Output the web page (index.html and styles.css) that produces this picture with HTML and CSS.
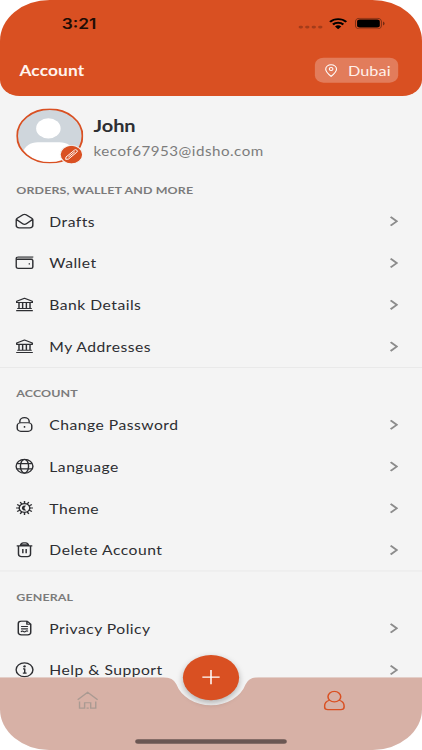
FILE: index.html
```html
<!DOCTYPE html>
<html lang="en">
<head>
<meta charset="utf-8">
<title>Account</title>
<link rel="stylesheet" href="styles.css">
</head>
<body>
<svg width="0" height="0" class="defs">
  <symbol id="chev" viewBox="0 0 8 12"><path d="M1 1l5.700 5L1 11" fill="none" stroke="#8c8c8c" stroke-width="1.900"/></symbol>
  <symbol id="bank" viewBox="0 0 18 18"><path d="M1.500 5.200 9 1.700l7.500 3.500v1.500h-15zM3.700 7v6.500M7.200 7v6.500M10.800 7v6.500M14.300 7v6.500M2 13.700h14M1 16.300h16"/></symbol>
</svg>
<div class="frame">
<div class="phone">
  <header class="header">
    <div class="status">
      <span class="time">3:21</span>
      <span class="signals">
        <i class="dots"><b></b><b></b><b></b><b></b></i>
        <svg class="wifi" width="17" height="13" viewBox="0 0 17 13"><g fill="none" stroke="#000" stroke-width="2.200"><path d="M1 4.600a10.700 10.700 0 0 1 15 0"/><path d="M3.700 7.600a6.900 6.900 0 0 1 9.600 0"/></g><path d="M5.600 9.700a4.200 4.200 0 0 1 5.800 0L8.500 12.800z"/></svg>
        <svg class="battery" width="28" height="13" viewBox="0 0 28 13"><rect x=".5" y=".5" width="24" height="12" rx="3.800" fill="none" stroke="#000" stroke-opacity=".4"/><rect x="2" y="2" width="21" height="9" rx="2.500"/><path d="M26 4.300v4.400q1.400-.6 1.400-2.200T26 4.300z" fill-opacity=".5"/></svg>
      </span>
    </div>
    <div class="bar">
      <h1>Account</h1>
      <div class="city"><svg width="12" height="15" viewBox="0 0 12 15" fill="none" stroke="#fff"><path d="M6 14C3.200 11 1 8.600 1 5.800a5 5 0 0 1 10 0C11 8.600 8.800 11 6 14z"/><circle cx="6" cy="5.600" r="1.700"/></svg><span>Dubai</span></div>
    </div>
  </header>

  <div class="profile">
    <div class="avatar">
      <svg width="62" height="62" viewBox="0 0 62 62"><clipPath id="c"><circle cx="31" cy="31" r="30"/></clipPath><g clip-path="url(#c)"><path fill="#cfd6dc" d="M0 0h62v62H0z"/><circle cx="29.700" cy="22.500" r="11.300" fill="#fff"/><path fill="#fff" d="M6 50c2-8 7-12 14-12h20c7 0 12 4 14 12v14H6z"/></g><circle cx="31" cy="31" r="30.200" fill="none" stroke="#d95022" stroke-width="1.700"/></svg>
      <svg class="edit" width="22" height="22" viewBox="0 0 22 22"><circle cx="11" cy="11" r="10.400" fill="#d95022" stroke="#f4f4f4"/><g transform="rotate(-45 11 11)" fill="none" stroke="#fff" stroke-width=".9"><path d="M3.500 11l2-1.600h11q1.600 0 1.600 1.600t-1.600 1.600h-11zM7 11h8.500"/></g></svg>
    </div>
    <div class="who"><h2>John</h2><p>kecof67953@idsho.com</p></div>
  </div>

  <section>
    <h3>ORDERS, WALLET AND MORE</h3>
    <div class="row"><svg class="ico" viewBox="0 0 18 18"><path d="M1 7.700Q1 6.500 2 5.800L7.500 1.800Q9 .8 10.500 1.800L16 5.800Q17 6.500 17 7.700V14Q17 17 14 17H4Q1 17 1 14zM1.300 7.200l5.900 5q1.800 1.500 3.600 0l5.900-5"/></svg><span>Drafts</span><svg class="chev"><use href="#chev"/></svg></div>
    <div class="row"><svg class="ico" viewBox="0 0 18 18"><path fill="#aaa" stroke="none" d="M2 2.500h15v2.200H2z"/><path d="M17.500 2.300H3Q1 2.300 1 4v9.500Q1 15.600 3 15.600h12.500Q17 15.600 17 14V6.500Q17 5 15.500 5H1.500"/><path d="M13 10.300h1.300" stroke-width="1.600"/></svg><span>Wallet</span><svg class="chev"><use href="#chev"/></svg></div>
    <div class="row"><svg class="ico"><use href="#bank"/></svg><span>Bank Details</span><svg class="chev"><use href="#chev"/></svg></div>
    <div class="row"><svg class="ico"><use href="#bank"/></svg><span>My Addresses</span><svg class="chev"><use href="#chev"/></svg></div>
  </section>

  <section>
    <h3>ACCOUNT</h3>
    <div class="row"><svg class="ico" viewBox="0 0 18 18"><rect x="2" y="7" width="14" height="10" rx="3.500"/><path d="M4.500 7V5.500a4.500 4.500 0 0 1 9 0V7M9 10.800v2.200"/></svg><span>Change Password</span><svg class="chev"><use href="#chev"/></svg></div>
    <div class="row"><svg class="ico" viewBox="0 0 18 18"><circle cx="9" cy="9" r="8.100"/><ellipse cx="9" cy="9" rx="3.900" ry="8.100"/><path d="M1.800 6h14.400M1.800 12h14.400"/></svg><span>Language</span><svg class="chev"><use href="#chev"/></svg></div>
    <div class="row"><svg class="ico" viewBox="0 0 18 18"><circle cx="9" cy="9" r="5.100"/><path d="M9 .8v3M9 14.200v3M.8 9h3M14.200 9h3M4.900 1.900l1.400 2.500M11.700 13.600l1.400 2.500M1.900 4.900l2.500 1.400M13.600 11.700l2.500 1.400M1.900 13.100l2.500-1.400M13.600 6.300l2.500-1.400M4.900 16.100l1.400-2.500M11.700 4.400l1.400-2.500"/><path fill="#2d2e32" stroke="none" d="M10.700 6.300a3 3 0 1 0 0 5.400 3 3 0 0 1 0-5.400z"/></svg><span>Theme</span><svg class="chev"><use href="#chev"/></svg></div>
    <div class="row"><svg class="ico" viewBox="0 0 18 18"><path d="M1.500 4.500h15M5 4.500Q5.400 1 8 1h2q2.600 0 3 3.500M3.200 4.500V14q0 3 3 3h5.600q3 0 3-3V4.500M7.400 8v5M10.600 8v5M5.500 3.200h7"/></svg><span>Delete Account</span><svg class="chev"><use href="#chev"/></svg></div>
  </section>

  <section class="last">
    <h3>GENERAL</h3>
    <div class="row"><svg class="ico" viewBox="0 0 18 18"><path d="M11.500 1H6Q3 1 3 4v10q0 3 3 3h6q3 0 3-3V4.500zM11.300 1v3.700H15M5.700 7.300h6.600M5.700 10h6.600M5.700 13.500q1.200-1.500 2.200-.5t2.200 0 2.200 0"/></svg><span>Privacy Policy</span><svg class="chev"><use href="#chev"/></svg></div>
    <div class="row"><svg class="ico" viewBox="0 0 18 18"><circle cx="9" cy="9" r="8.100"/><path d="M7.600 8H9.200v5M7.400 13.100h3.600"/><circle cx="9" cy="5.200" r=".6"/></svg><span>Help &amp; Support</span><svg class="chev"><use href="#chev"/></svg></div>
  </section>

  <nav class="tabs">
    <svg class="shape" width="390" height="82" viewBox="0 0 390 82"><path d="M0 0H151Q160 0 163 8A33.500 33.500 0 0 0 227 8Q230 0 239 0H390V82H0z" fill="#d7b1a6"/></svg>
    <svg class="home" width="20" height="22" viewBox="0 0 20 22" fill="none" stroke="#aa9a92" stroke-width="1.300"><path d="M.8 10.500 10 2l9.200 8.500M2.500 12.500v7.300h4.700v-6h5.600v6h4.700v-7.300M9 19.800h2"/></svg>
    <svg class="user" width="20" height="23" viewBox="0 0 20 23" fill="none" stroke="#d95022" stroke-width="1.400"><circle cx="10" cy="7" r="5.900"/><path d="M5.500 11Q1 12.500 1 17.500v1Q1 21.500 4 21.500h12q3 0 3-3v-1Q19 12.500 14.500 11"/></svg>
    <div class="fab"><svg width="18" height="18" viewBox="0 0 18 18"><path d="M9 1v16M1 9h16" stroke="#fff" stroke-width="1.400"/></svg></div>
    <div class="indicator"></div>
  </nav>
</div>
</div>
</body>
</html>
```
FILE: styles.css
```css
* { box-sizing: border-box; margin: 0; padding: 0; }
html, body { width: 422px; height: 750px; background: #fff; }
.frame { width: 422px; height: 750px; overflow: hidden; }
.defs { position: absolute; }
svg { display: block; flex: none; }

/* 390x844 device canvas fitted to the 422x750 window */
.phone {
  position: relative; width: 390px; height: 844px; overflow: hidden;
  border-radius: 46px; background: #f4f4f4;
  transform: scale(1.08205, .88863); transform-origin: 0 0;
  font-family: Lato, "Liberation Sans", sans-serif; color: #2d2e32;
}
.header { height: 108px; background: #d95022; border-radius: 0 0 18px 18px; padding: 14px 22px 0 18px; }
.status { height: 26px; display: flex; align-items: center; justify-content: space-between; padding: 0 12.400px 0 39px; }
.time { font: 600 16px/26px Inter, sans-serif; color: #200c05; }
.signals { display: flex; align-items: center; }
.dots { display: flex; gap: 2px; margin: 7px 6px 0 0; }
.dots b { width: 3.800px; height: 3.800px; border-radius: 50%; background: #a43c1a; }
.wifi { margin-right: 7px; position: relative; top: -1px; }
.battery { position: relative; top: -1px; }
.bar { margin-top: 25px; height: 28px; display: flex; align-items: center; justify-content: space-between; }
h1 { font-size: 16px; line-height: 28px; font-weight: 700; letter-spacing: .1px; color: #fff4ef; }
.city { width: 77px; height: 28px; border-radius: 8px; background: #e27c5b; display: flex; align-items: center; padding-left: 9px; color: #fff1eb; font-size: 15px; letter-spacing: .1px; }
.city span { margin-left: 9.500px; }

.profile { height: 77px; padding: 14px 15px 0; display: flex; }
.avatar { position: relative; width: 62px; height: 62px; }
.edit { position: absolute; left: 40px; top: 41px; }
.who { margin-left: 9.500px; }
h2 { font-size: 18.500px; line-height: 22px; font-weight: 700; letter-spacing: -.1px; padding-top: 7.500px; }
.who p { font-size: 14px; line-height: 18px; letter-spacing: .46px; color: #7c7c7c; margin-top: 9.500px; }

section { border-bottom: 1px solid #e8e8e8; height: 229px; }
.last { height: 135px; border-bottom: 0; }
h3 { height: 41px; padding: 17.300px 15px 0; font-size: 11.500px; line-height: 24px; font-weight: 700; letter-spacing: .12px; color: #7b7b7b; }
.row { height: 47px; display: flex; align-items: center; padding: 0 22px 0 14.300px; font-size: 14.500px; }
.row span { flex: 1; margin-left: 14px; letter-spacing: .44px; }
.ico { width: 17.300px; height: 17.300px; fill: none; stroke: #2d2e32; stroke-width: 1.400; stroke-linejoin: round; position: relative; top: -.4px; }
.chev { width: 8px; height: 12px; position: relative; top: -.4px; }

.tabs { position: absolute; left: 0; top: 762px; width: 390px; height: 82px; display: flex; justify-content: space-between; padding: 15px 71px 0; }
.shape, .fab, .indicator { position: absolute; }
.shape { left: 0; top: 0; }
.fab, .home, .user { z-index: 1; }
.fab { left: 169px; top: -25.500px; width: 52px; height: 51px; border-radius: 50%; background: #d95022; display: flex; align-items: center; justify-content: center; box-shadow: 0 3px 6px rgba(0,0,0,.28); }
.indicator { left: 125px; top: 69.500px; width: 140px; height: 5px; border-radius: 3px; background: #6b5753; }
```
